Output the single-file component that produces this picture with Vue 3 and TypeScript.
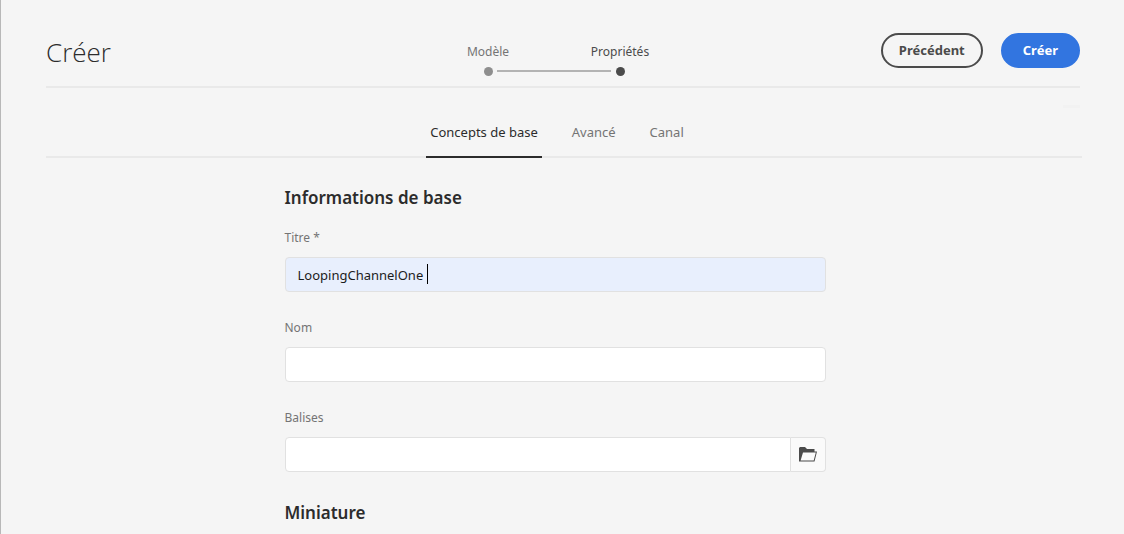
<script setup lang="ts">
import { ref } from 'vue'

const steps = [
  { id: 'template', label: 'Modèle', current: false },
  { id: 'properties', label: 'Propriétés', current: true },
]
const tabs = ['Concepts de base', 'Avancé', 'Canal']
const activeTab = ref(tabs[0])
const title = ref('LoopingChannelOne')
const name = ref('')
const tags = ref('')
</script>

<template>
  <main class="page">
    <header class="header">
      <h1 class="heading">Créer</h1>
      <ol class="steps">
        <li v-for="step in steps" :key="step.id" class="step" :class="{ current: step.current }">
          <span class="step-label">{{ step.label }}</span>
          <span class="dot"></span>
        </li>
      </ol>
      <div class="actions">
        <button type="button" class="btn outline">Précédent</button>
        <button type="submit" form="properties" class="btn primary">Créer</button>
      </div>
      <span class="marker"></span>
    </header>

    <nav class="tabs" role="tablist">
      <button
        v-for="tab in tabs"
        :key="tab"
        type="button"
        role="tab"
        class="tab"
        :class="{ active: tab === activeTab }"
        :aria-selected="tab === activeTab"
        @click="activeTab = tab"
      >{{ tab }}</button>
    </nav>

    <div class="body">
      <form id="properties" class="form" @submit.prevent>
        <h2 class="section">Informations de base</h2>
        <div class="field">
          <label for="title">Titre *</label>
          <div class="control">
            <input id="title" v-model="title" class="input filled" type="text" />
            <span class="caret"></span>
          </div>
        </div>
        <div class="field">
          <label for="name">Nom</label>
          <div class="control">
            <input id="name" v-model="name" class="input" type="text" />
          </div>
        </div>
        <div class="field">
          <label for="tags">Balises</label>
          <div class="control">
            <input id="tags" v-model="tags" class="input joined" type="text" />
            <button type="button" class="browse" aria-label="Parcourir">
              <svg width="18" height="15" viewBox="0 0 18 15">
                <path
                  fill="#4b4b4b"
                  fill-rule="evenodd"
                  d="M0 14.500V1L1 0H6L8 2H15.500V4.500H18L15.500 14.500H0ZM4 5.500L1.600 13.500H14.700L16.800 5.500Z"
                />
              </svg>
            </button>
          </div>
        </div>
        <h2 class="section">Miniature</h2>
      </form>
    </div>
  </main>
</template>

<style>
body {
  background: #f5f5f5;
}
</style>

<style scoped>
.page {
  box-sizing: border-box;
  min-height: 100vh;
  padding: 0 42px 0 45px;
  border-left: 1px solid #b8b8b8;
  background: #f5f5f5;
  color: #2c2c2c;
  font-family: "Noto Sans", "Open Sans", sans-serif;
}

.header {
  position: relative;
  box-sizing: border-box;
  display: grid;
  grid-template-columns: 1fr auto 1fr;
  align-items: center;
  height: 88px;
  margin-right: 2px;
  padding-top: 14px;
  border-bottom: 2px solid #e9e9e9;
}

.heading {
  margin: 4px 0 0;
  font-family: "Open Sans", "Noto Sans", sans-serif;
  font-size: 26px;
  font-weight: 300;
  line-height: 36px;
}

.steps {
  display: flex;
  align-self: end;
  margin: 0;
  padding: 0 18px 10px 0;
  list-style: none;
}

.step {
  position: relative;
  display: flex;
  flex-direction: column;
  align-items: center;
  gap: 6px;
  width: 132px;
  color: #747474;
  font-size: 12px;
  line-height: 18px;
}

.step.current {
  color: #4b4b4b;
}

.dot {
  width: 9px;
  height: 9px;
  border-radius: 50%;
  background: #8e8e8e;
}

.current .dot {
  background: #4b4b4b;
}

.step + .step::before {
  content: "";
  position: absolute;
  right: 75px;
  bottom: 4px;
  width: 114px;
  height: 2px;
  background: #b3b3b3;
}

.actions {
  display: flex;
  justify-content: flex-end;
  gap: 18px;
}

.btn {
  box-sizing: border-box;
  height: 35px;
  padding: 0 16px;
  border: 2px solid #4b4b4b;
  border-radius: 18px;
  background: transparent;
  color: #4b4b4b;
  font: bold 13px "Noto Sans", sans-serif;
}

.primary {
  padding: 0 20px;
  border-color: #3275e0;
  background: #3275e0;
  color: #fff;
}

.marker {
  position: absolute;
  right: 0;
  bottom: -22px;
  width: 17px;
  height: 3px;
  background: #f2f2f2;
}

.tabs {
  display: flex;
  justify-content: center;
  gap: 26px;
  padding: 20px 14px 0 0;
  border-bottom: 2px solid #e9e9e9;
}

.tab {
  height: 50px;
  margin-bottom: -2px;
  padding: 0 4px;
  border: 0;
  border-bottom: 2px solid transparent;
  background: none;
  color: #747474;
  font: 13px "Noto Sans", sans-serif;
}

.tab.active {
  border-bottom-color: #2c2c2c;
  color: #2c2c2c;
}

.body {
  padding: 26px 18px 0 0;
}

.form {
  max-width: 541px;
  margin: 0 auto;
}

.section {
  margin: 0;
  font-size: 17px;
  font-weight: 600;
  line-height: 27px;
}

.field {
  display: flex;
  flex-direction: column;
  gap: 11px;
  margin: 0 0 27px;
}

.section + .field {
  margin-top: 18px;
}

.field label {
  color: #747474;
  font-size: 12px;
  line-height: 17px;
}

.control {
  position: relative;
  display: flex;
}

.input {
  box-sizing: border-box;
  flex: 1;
  min-width: 0;
  height: 35px;
  padding: 0 12px;
  border: 1px solid #e1e1e1;
  border-radius: 4px;
  outline: 0;
  background: #fff;
  color: #1c1c1c;
  font: 13px "Noto Sans", sans-serif;
}

.filled {
  background: #e8effd;
}

.joined {
  border-radius: 4px 0 0 4px;
}

.caret {
  position: absolute;
  top: 7px;
  left: 142px;
  width: 1px;
  height: 20px;
  background: #000;
}

.browse {
  display: flex;
  align-items: center;
  justify-content: center;
  width: 35px;
  padding: 0;
  border: 1px solid #e1e1e1;
  border-left: 0;
  border-radius: 0 4px 4px 0;
  background: #fafafa;
}
</style>
